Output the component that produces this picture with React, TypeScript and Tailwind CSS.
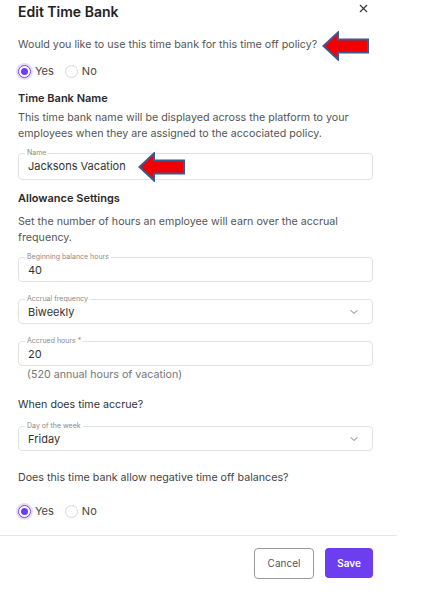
import { X, ChevronDown } from "lucide-react"

const font = { fontFamily: "Inter, 'Noto Sans', sans-serif" }

function RedArrow() {
  return (
    <svg width="48" height="30" viewBox="0 0 48 30">
      <polygon
        points="1.5,15 16,1.5 16,8.5 46,8.5 46,21.5 16,21.5 16,28.5"
        fill="#f00000"
        stroke="#3a5a92"
        strokeWidth="2"
        strokeLinejoin="miter"
      />
    </svg>
  )
}

function Radio({ checked, label }: { checked: boolean; label: string }) {
  return (
    <label className="flex items-center gap-[4px]">
      {checked ? (
        <span className="w-[13px] h-[13px] rounded-full border-[1.5px] border-[#6d3ef0] shadow-[0_0_0_2px_#e6dcfb] flex items-center justify-center">
          <span className="w-[7px] h-[7px] rounded-full bg-[#6d3ef0]" />
        </span>
      ) : (
        <span className="w-[13px] h-[13px] rounded-full border border-[#d8d8d8]" />
      )}
      <span className="text-[11px] leading-[16px] text-[#444]">{label}</span>
    </label>
  )
}

function Field({
  label,
  value,
  select,
  tall,
}: {
  label: string
  value: string
  select?: boolean
  tall?: boolean
}) {
  return (
    <fieldset
      className={`border border-[#e2e2e2] rounded-[4px] pl-[9px] pr-[12px] pt-[2px] ${tall ? "pb-[6px]" : "pb-[4px]"}`}
    >
      <legend className="text-[7px] leading-[8px] text-[#8a8a8a] px-[2px] ml-[-3px]">{label}</legend>
      <div className="flex items-center justify-between">
        <span className="text-[11px] leading-[14px] text-[#333]">{value}</span>
        {select && <ChevronDown size={12} strokeWidth={2} className="text-[#777]" />}
      </div>
    </fieldset>
  )
}

export default function App() {
  return (
    <div className="relative w-[397px] bg-white" style={font}>
      <div className="pl-[18px] pr-[24px] pt-[3px]">
        <div className="flex justify-between items-start">
          <h2 className="text-[14px] leading-[18px] font-semibold text-[#222]">Edit Time Bank</h2>
          <X size={13} strokeWidth={2} className="text-[#333] mt-[-1px] mr-[3px]" />
        </div>

        <p className="mt-[16px] text-[10.7px] leading-[16px] text-[#555]">
          Would you like to use this time bank for this time off policy?
        </p>
        <div className="mt-[10px] flex items-center gap-[11px]">
          <Radio checked label="Yes" />
          <Radio checked={false} label="No" />
        </div>

        <h3 className="mt-[11px] text-[11px] leading-[16px] font-semibold text-[#2a2a2a]">Time Bank Name</h3>
        <p className="mt-[4px] text-[10.7px] leading-[16px] text-[#555]">
          This time bank name will be displayed across the platform to your employees when they are assigned to
          the accociated policy.
        </p>
        <div className="mt-[7px]">
          <Field label="Name" value="Jacksons Vacation" tall />
        </div>

        <h3 className="mt-[10px] text-[11px] leading-[16px] font-semibold text-[#2a2a2a]">Allowance Settings</h3>
        <p className="mt-[8px] pr-[20px] text-[10.7px] leading-[16px] text-[#555]">
          Set the number of hours an employee will earn over the accrual frequency.
        </p>
        <div className="mt-[7px]">
          <Field label="Beginning balance hours" value="40" />
        </div>
        <div className="mt-[13px]">
          <Field label="Accrual frequency" value="Biweekly" select />
        </div>
        <div className="mt-[13px]">
          <Field label="Accrued hours *" value="20" />
        </div>
        <p className="mt-[1px] ml-[9px] text-[10.7px] leading-[16px] text-[#777]">(520 annual hours of vacation)</p>

        <p className="mt-[14px] text-[10.7px] leading-[16px] text-[#333]">When does time accrue?</p>
        <div className="mt-[9px]">
          <Field label="Day of the week" value="Friday" select />
        </div>

        <p className="mt-[19px] text-[10.7px] leading-[16px] text-[#444]">
          Does this time bank allow negative time off balances?
        </p>
        <div className="mt-[17px] flex items-center gap-[11px]">
          <Radio checked label="Yes" />
          <Radio checked={false} label="No" />
        </div>
      </div>

      <div className="mt-[16px] border-t border-[#e8e8e8]" />

      <div className="flex justify-end gap-[11px] pr-[24px] pt-[12px] pb-[19px]">
        <button className="w-[60px] h-[31px] rounded-[4px] border-[1.5px] border-[#9a9a9a] text-[10px] text-[#555] bg-white">
          Cancel
        </button>
        <button className="w-[48px] h-[30px] rounded-[4px] bg-[#6d3ef0] text-[10px] font-semibold text-white">
          Save
        </button>
      </div>

      <div className="absolute left-[322px] top-[31px]">
        <RedArrow />
      </div>
      <div className="absolute left-[138px] top-[152px]">
        <RedArrow />
      </div>
    </div>
  )
}
